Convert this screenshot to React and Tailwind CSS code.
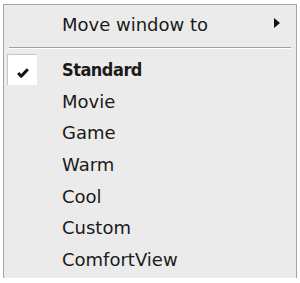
import React from 'react';

const items = ['Standard', 'Movie', 'Game', 'Warm', 'Cool', 'Custom', 'ComfortView'];

export default function App() {
  return (
    <div className="w-[300px] h-[283px] bg-white pl-[3px] pt-[4px] overflow-hidden" style={{ fontFamily: '"DejaVu Sans", Tahoma, sans-serif' }}>
      <div className="w-[294px] h-[274px] bg-[#ebebeb] border-l border-t border-r border-[#a3a3a3] text-[#1a1a1a]">
        {/* submenu row */}
        <div className="h-[39px] flex items-center relative">
          <span className="pl-[58px] text-[18px] leading-none">Move window to</span>
          <span className="absolute left-[270px] top-[13px] w-0 h-0 border-y-[5px] border-y-transparent border-l-[6px] border-l-[#111]"></span>
        </div>
        <div className="mx-[5px] mt-[3px] h-[2px] border-t border-[#a0a0a0] border-b border-b-white"></div>

        <div className="pt-[5px]">
          {items.map((label, i) => (
            <div key={label} className="h-[31.7px] flex items-center relative">
              {i === 0 && (
                <div className="absolute left-[3px] top-0 w-[30px] h-[31px] bg-white border-l border-t border-[#c6c6c6]">
                  <svg className="absolute left-[9px] top-[13px]" width="12" height="10" viewBox="0 0 12 10">
                    <path d="M1.2 5 L4.2 8.2 L10.8 1.2" fill="none" stroke="#111" strokeWidth="3.1" strokeLinejoin="round" />
                  </svg>
                </div>
              )}
              <span className={`pl-[58px] text-[18px] leading-none ${i === 0 ? 'font-bold font-stretch-condensed tracking-[-0.5px]' : ''}`}>{label}</span>
            </div>
          ))}
        </div>
      </div>
    </div>
  );
}
